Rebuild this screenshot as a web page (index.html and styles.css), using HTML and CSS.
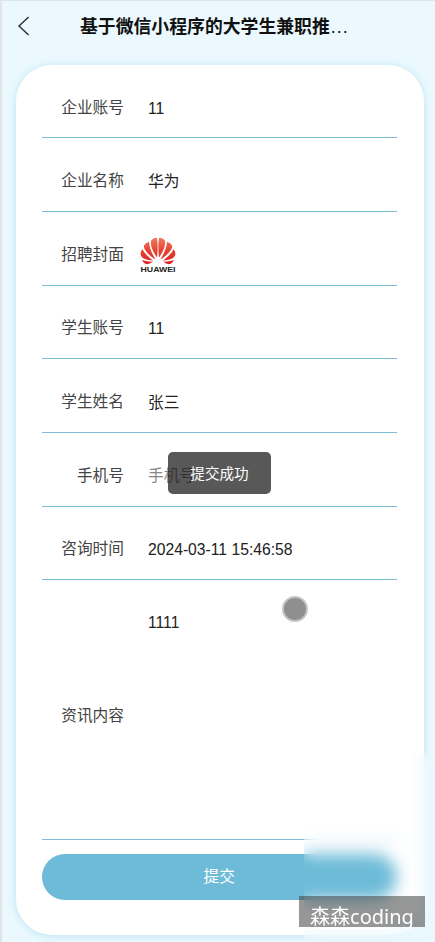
FILE: index.html
```html
<!DOCTYPE html>
<html lang="zh-CN">
<head>
<meta charset="utf-8">
<title>提交</title>
<link rel="stylesheet" href="styles.css">
</head>
<body>
<div class="page">
  <header class="nav">
    <svg class="back" width="14" height="20" viewBox="0 0 14 20"><path d="M11.600 1 2 10l9.600 9" fill="none" stroke="#333" stroke-width="1.500"/></svg>
    <h1 class="title">基于微信小程序的大学生兼职推<span class="dots">...</span></h1>
  </header>
  <main class="card">
    <div class="row"><span class="label">企业账号</span><span class="value">11</span></div>
    <div class="row"><span class="label">企业名称</span><span class="value">华为</span></div>
    <div class="row"><span class="label">招聘封面</span>
      <svg class="logo" width="36" height="38" viewBox="0 0 36 38">
        <defs><linearGradient id="petal" gradientUnits="userSpaceOnUse" x1="0" y1="0" x2="0" y2="27"><stop offset="0" stop-color="#ee8062"/><stop offset=".5" stop-color="#ea4232"/><stop offset="1" stop-color="#d62426"/></linearGradient></defs>
        <g fill="url(#petal)">
          <path d="M17 20.500C11.500 13 9.800 6 11.500 3Q14 .6 17 .9C18 7 17.700 14 17 20.500Z"/>
          <path d="M19 20.500C24.500 13 26.200 6 24.500 3Q22 .6 19 .9C18 7 18.300 14 19 20.500Z"/>
          <path d="M15.600 22.500C7.500 17.500 3 12 4 8.600Q5.500 5.500 9 4.700C9.500 11 12 17 15.600 22.500Z"/>
          <path d="M20.400 22.500C28.500 17.500 33 12 32 8.600Q30.500 5.500 27 4.700C26.500 11 24 17 20.400 22.500Z"/>
          <path d="M13.500 23.600C6.500 23.200 .8 21.500 .6 17.100Q.5 14 2.300 12.300C5 17 8.800 20.800 13.500 23.600Z"/>
          <path d="M22.500 23.600C29.500 23.200 35.200 21.500 35.400 17.100Q35.500 14 33.700 12.300C31 17 27.200 20.800 22.500 23.600Z"/>
          <path d="M12.800 24.800Q7 29.300 3.600 25.500L2 23Q7.500 25 12.800 24.800Z"/>
          <path d="M23.200 24.800Q29 29.300 32.400 25.500L34 23Q28.500 25 23.200 24.800Z"/>
        </g>
        <text class="brand" x="0.500" y="34.600" textLength="35" lengthAdjust="spacingAndGlyphs">HUAWEI</text>
      </svg>
    </div>
    <div class="row"><span class="label">学生账号</span><span class="value">11</span></div>
    <div class="row"><span class="label">学生姓名</span><span class="value">张三</span></div>
    <div class="row"><span class="label">手机号</span><span class="value placeholder">手机号</span></div>
    <div class="row"><span class="label">咨询时间</span><span class="value">2024-03-11 15:46:58</span></div>
    <div class="row area"><span class="label">资讯内容</span><span class="value">1111</span></div>
    <div class="submit">提交</div>
  </main>
  <div class="toast">提交成功</div>
  <div class="pointer"></div>
  <div class="haze"></div>
  <div class="watermark">森森coding</div>
</div>
</body>
</html>
```
FILE: styles.css
```css
* { box-sizing: border-box; }
body { margin: 0; overflow: hidden; }
.page {
  position: relative;
  width: 435px;
  height: 942px;
  overflow: hidden;
  padding: 0 11.500px 0 13.500px;
  background: #ebf9fe;
  border-top: 1px solid #e0e2ec;
  border-left: 2px solid #e3e3ec;
  font-family: "Liberation Sans", "Noto Sans CJK SC", sans-serif;
  font-size: 15.700px;
  color: #222;
}
.nav { display: flex; align-items: center; height: 50px; margin-bottom: 14px; }
.back { margin-left: 1px; flex: none; }
.title {
  margin: 1px 0 0 49.500px;
  font-size: 17.850px;
  line-height: 24px;
  font-weight: 700;
  color: #111;
  white-space: nowrap;
}
.dots { font-weight: 400; letter-spacing: 1px; margin-left: 1px; }
.card {
  height: 870px;
  padding: 0 27px 0 26.500px;
  border-radius: 36px;
  background: #fff;
  box-shadow: 0 1px 8px #b9e3f2;
}
.row {
  display: flex;
  align-items: center;
  height: 73.650px;
  padding-top: 13px;
  border-bottom: 1px solid #7dbdd6;
}
.row:first-child { height: 73.300px; }
.label { width: 82px; flex: none; text-align: right; color: #444; line-height: 24px; }
.value { margin: 2px 0 0 24px; line-height: 24px; white-space: nowrap; }
.placeholder { color: #888; margin-top: 0; }
.logo { margin: 2px 0 0 16px; flex: none; }
.brand { font: 700 7px "Liberation Sans", sans-serif; fill: #222; }
.area { height: 260px; }
.area .value { align-self: flex-start; margin-top: 18px; }
.submit {
  height: 46px;
  margin-top: 14px;
  border-radius: 23px;
  background: #6dbbd8;
  color: #fff;
  text-align: center;
  line-height: 45px;
}
.toast {
  position: absolute;
  left: 166px;
  top: 451px;
  width: 103px;
  height: 42px;
  border-radius: 5px;
  background: rgba(17, 17, 17, .7);
  color: #fff;
  font-size: 14.600px;
  line-height: 45px;
  text-align: center;
}
.pointer {
  position: absolute;
  left: 280px;
  top: 595px;
  width: 26px;
  height: 26px;
  border: 2.500px solid #c4c4c4;
  border-radius: 50%;
  background: #8e8f8e;
}
.haze {
  position: absolute;
  left: 302px;
  top: 752px;
  right: 0;
  bottom: 0;
  backdrop-filter: blur(8px);
}
.watermark {
  position: absolute;
  left: 297px;
  top: 895px;
  width: 126px;
  height: 31px;
  background: rgba(70, 70, 70, .56);
  color: #fff;
  font: 20px/41px "Noto Sans", "Noto Sans CJK SC", sans-serif;
  text-align: center;
  white-space: nowrap;
}
```
